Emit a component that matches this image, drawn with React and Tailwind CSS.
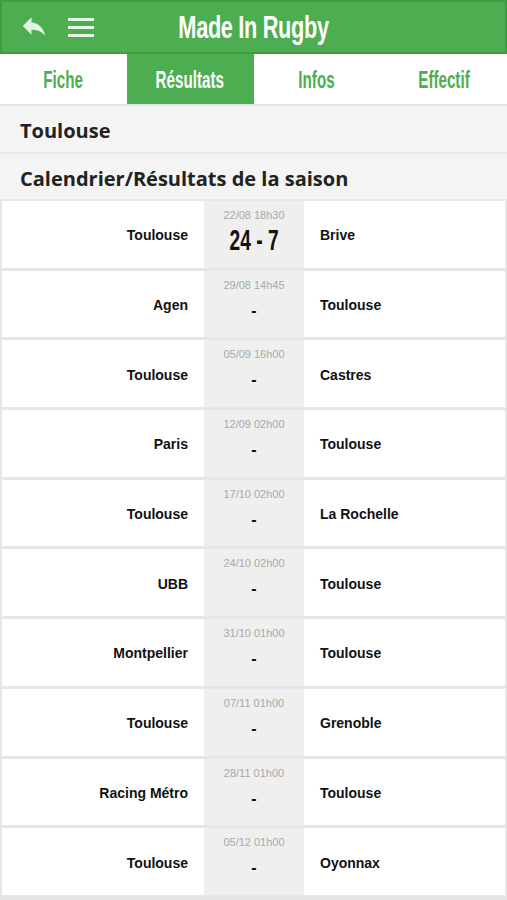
import React from "react";

const matches = [
  { home: "Toulouse", away: "Brive", date: "22/08 18h30", score: "24 - 7" },
  { home: "Agen", away: "Toulouse", date: "29/08 14h45" },
  { home: "Toulouse", away: "Castres", date: "05/09 16h00" },
  { home: "Paris", away: "Toulouse", date: "12/09 02h00" },
  { home: "Toulouse", away: "La Rochelle", date: "17/10 02h00" },
  { home: "UBB", away: "Toulouse", date: "24/10 02h00" },
  { home: "Montpellier", away: "Toulouse", date: "31/10 01h00" },
  { home: "Toulouse", away: "Grenoble", date: "07/11 01h00" },
  { home: "Racing Métro", away: "Toulouse", date: "28/11 01h00" },
  { home: "Toulouse", away: "Oyonnax", date: "05/12 01h00" },
];

const cond = { fontFamily: '"Liberation Sans", Arial, sans-serif' };

export default function App() {
  return (
    <div className="w-[507px] h-[900px] overflow-hidden bg-[#e6e6e6]" style={{ fontFamily: '"Liberation Sans", Arial, sans-serif' }}>
      <div className="h-[54px] bg-[#4cae50] border-2 border-[#3e9c42] flex items-center relative">
        <div className="absolute left-[17px] top-[9px]">
          <svg width="30" height="30" viewBox="0 0 24 24" fill="#e3f2e3">
            <path d="M10 9V5l-7 7 7 7v-4.1c5 0 8.5 1.6 11 5.1-1-5-4-10-11-11z" />
          </svg>
        </div>
        <div className="absolute left-[66px] top-[16px] flex flex-col gap-[5px]">
          <div className="w-[26px] h-[3px] bg-[#e8f5e8]" />
          <div className="w-[26px] h-[3px] bg-[#e8f5e8]" />
          <div className="w-[26px] h-[3px] bg-[#e8f5e8]" />
        </div>
        <div className="w-full text-center text-white leading-none">
          <span className="inline-block font-bold text-[32px] scale-x-[0.68] tracking-[-0.5px]" style={cond}>
            Made In Rugby
          </span>
        </div>
      </div>
      <div className="h-[52px] bg-white grid grid-cols-4 border-b-2 border-[#e3e3e3]">
        {["Fiche", "Résultats", "Infos", "Effectif"].map((t, i) => (
          <div
            key={t}
            className={
              "flex items-center justify-center pt-[2px] " +
              (i === 1 ? "bg-[#4cae50] text-white" : "text-[#4cae50]")
            }
          >
            <span className="inline-block font-bold text-[23px] scale-x-[0.66]" style={cond}>
              {t}
            </span>
          </div>
        ))}
      </div>
      <div style={{ fontFamily: '"Open Sans", sans-serif' }}>
        <div className="h-[48px] bg-[#f4f4f4] border-b-2 border-[#e8e8e8] flex items-center pl-[20px] pt-[3px] text-[20px] font-bold text-[#222]">
          Toulouse
        </div>
        <div className="h-[47px] bg-[#f4f4f4] border-b-2 border-[#e6e6e6] flex items-center pl-[20px] pt-[4px] text-[20px] font-bold text-[#222]">
          Calendrier/Résultats de la saison
        </div>
      </div>
      <div className="px-[2px] flex flex-col gap-[3px]">
        {matches.map((m, i) => (
          <div key={i} className="h-[66.7px] bg-white flex">
            <div className="w-[202px] flex items-center justify-end pr-[16px] pt-[3px] text-[14px] font-bold text-[#111]">
              {m.home}
            </div>
            <div className="w-[100px] bg-[#efefef] flex flex-col items-center pt-[9px]">
              <div className="text-[11px] text-[#a8a8a8] leading-none">{m.date}</div>
              {m.score ? (
                <div className="leading-none mt-[5px]">
                  <span className="inline-block font-bold text-[29px] text-[#111] scale-x-[0.66]" style={cond}>
                    {m.score}
                  </span>
                </div>
              ) : (
                <div className="text-[16px] font-bold text-[#111] leading-none mt-[12px]">-</div>
              )}
            </div>
            <div className="flex-1 flex items-center pl-[16px] pt-[3px] text-[14px] font-bold text-[#111]">
              {m.away}
            </div>
          </div>
        ))}
      </div>
    </div>
  );
}
